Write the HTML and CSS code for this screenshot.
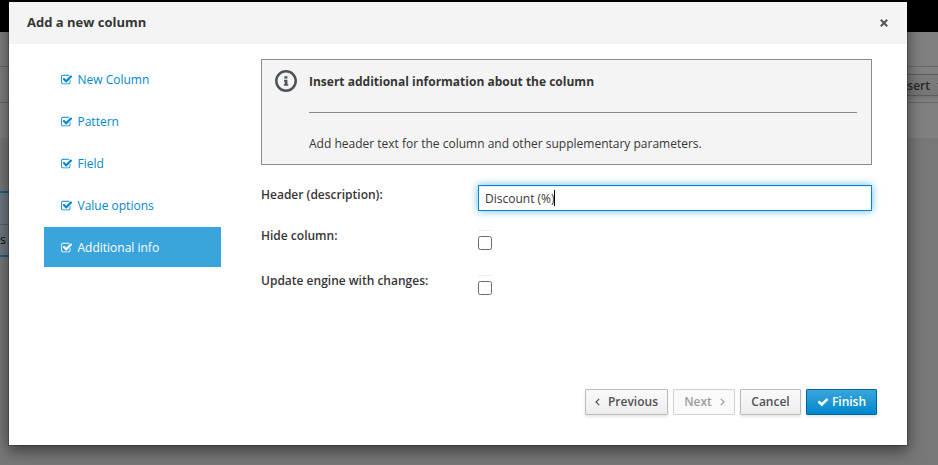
FILE: index.html
```html
<!DOCTYPE html>
<html lang="en">
<head>
<meta charset="utf-8">
<title>Add a new column</title>
<link rel="stylesheet" href="styles.css">
</head>
<body>
<svg class="defs" width="0" height="0">
  <symbol id="done" viewBox="0 0 1664 1792"><path d="M1408 930v318q0 119-84.5 203.5t-203.5 84.5h-832q-119 0-203.5-84.5t-84.5-203.5v-832q0-119 84.5-203.5t203.5-84.5h832q63 0 117 25 15 7 18 23 3 17-9 29l-49 49q-10 10-23 10-3 0-9-2-23-6-45-6h-832q-66 0-113 47t-47 113v832q0 66 47 113t113 47h832q66 0 113-47t47-113v-254q0-13 9-22l64-64q10-10 23-10 6 0 12 3 20 8 20 29zm231-489l-814 814q-24 24-57 24t-57-24l-430-430q-24-24-24-57t24-57l110-110q24-24 57-24t57 24l263 263 647-647q24-24 57-24t57 24l110 110q24 24 24 57t-24 57z"/></symbol>
</svg>
<div class="page">
  <div class="masthead"></div>
  <div class="crumbs"></div>
  <div class="toolbar"><span class="insert">Insert<span class="caret"></span></span></div>
  <div class="subbar"></div>
  <div class="canvas"><div class="grid-cell head"></div><div class="grid-cell">s</div></div>
</div>
<div class="modal">
  <header class="modal-header">
    <h4>Add a new column</h4>
    <svg class="close" width="8" height="8" viewBox="0 0 8 8"><path d="M.8.8l6.4 6.4M7.2.8L.8 7.2"/></svg>
  </header>
  <div class="modal-body">
    <nav class="steps">
      <a class="step"><svg><use href="#done"/></svg>New Column</a>
      <a class="step"><svg><use href="#done"/></svg>Pattern</a>
      <a class="step"><svg><use href="#done"/></svg>Field</a>
      <a class="step"><svg><use href="#done"/></svg>Value options</a>
      <a class="step active"><svg><use href="#done"/></svg>Additional info</a>
    </nav>
    <main class="content">
      <section class="info">
        <svg class="info-icon" width="22" height="22" viewBox="0 0 22 22"><circle cx="11" cy="11" r="9.7"/><path d="M9.4 6.2h3v2.3h-3zM9 9.8h3.4v4.4h.9v1.6H8.9v-1.6h.8v-2.8H9z"/></svg>
        <div class="info-text">
          <strong>Insert additional information about the column</strong>
          <hr>
          <p>Add header text for the column and other supplementary parameters.</p>
        </div>
      </section>
      <div class="row"><label>Header (description):</label><div class="field">Discount (%)<span class="cursor"></span></div></div>
      <div class="row hide"><label>Hide column:</label><span class="check"><input type="checkbox"></span></div>
      <div class="row update"><label>Update engine with changes:</label><span class="check"><input type="checkbox"></span></div>
    </main>
  </div>
  <footer class="modal-footer">
    <button class="btn previous"><svg width="5" height="8" viewBox="0 0 5 8"><path d="M4.2.8L1 4l3.2 3.2"/></svg>Previous</button>
    <button class="btn next">Next<svg width="5" height="8" viewBox="0 0 5 8"><path d="M.8.8L4 4 .8 7.2"/></svg></button>
    <button class="btn cancel">Cancel</button>
    <button class="btn finish"><svg width="12" height="12" viewBox="0 0 1792 1792"><path d="M1671 566q0 40-28 68l-724 724-136 136q-28 28-68 28t-68-28l-136-136-362-362q-28-28-28-68t28-68l136-136q28-28 68-28t68 28l294 295 656-657q28-28 68-28t68 28l136 136q28 28 28 68z"/></svg>Finish</button>
  </footer>
</div>
</body>
</html>
```
FILE: styles.css
```css
* { box-sizing: border-box; }
body { margin: 0; height: 465px; overflow: hidden; position: relative; font: 12px/20px "Open Sans", sans-serif; color: #363636; }
.defs { position: absolute; }
.page { height: 465px; display: flex; flex-direction: column; background: #787878; }
.masthead { height: 32px; background: #000; }
.crumbs { height: 35px; background: #808080; border-bottom: 1px solid #696969; }
.toolbar { height: 36px; padding: 7px 0 6px; display: flex; justify-content: flex-end; background: #808080; border-bottom: 1px solid #696969; }
.insert { width: 68px; height: 22px; margin-right: -10px; padding: 2px 0 0 15px; display: flex; align-items: center; border: 1px solid #5d5d5d; background: linear-gradient(#7d7d7d, #767676); box-shadow: 0 2px 3px rgba(0,0,0,.1); font-weight: 600; color: #26292c; }
.caret { margin: -2px 0 0 7px; border: 4px solid transparent; border-top-color: #26292c; border-bottom: 0; }
.subbar { height: 35px; background: #808080; }
.canvas { flex: 1; padding-top: 53px; }
.grid-cell { width: 30px; height: 32px; padding-top: 5px; background: #6f7881; border-bottom: 2px solid #1e607e; color: #080808; }
.grid-cell.head { height: 34px; border-top: 2px solid #1e607e; border-bottom: 1px solid #625d5a; }
.modal { position: absolute; left: 8px; top: 1px; width: 900px; height: 445px; display: flex; flex-direction: column; background: #fff; background-clip: padding-box; border: 1px solid rgba(0,0,0,.2); border-radius: 1px; box-shadow: 0 5px 15px rgba(0,0,0,.5); }
.modal-header { height: 42px; padding: 0 19px 2px 18px; display: flex; align-items: center; justify-content: space-between; background: #f4f4f4; }
.modal-header h4 { margin: 0; font-size: 13px; font-weight: 700; }
.close { margin-top: 1px; stroke: #555; stroke-width: 2; }
.modal-body { flex: 1; display: flex; padding: 15px 35px 0; }
.steps { width: 177px; margin-right: 40px; display: flex; flex-direction: column; gap: 2px; }
.step { height: 40px; padding: 1px 0 0 17px; display: flex; align-items: center; color: #0088ce; }
.step svg { width: 11.2px; height: 12px; margin: 0 5.3px 0 0; fill: currentColor; }
.step.active { background: #39a5dc; color: #fff; }
.content { width: 611px; }
.info { height: 106px; padding: 11px 14px 0 13px; display: flex; background: #f4f4f4; border: 1px solid #8b8b8b; }
.info-icon { margin: -1px 12px 0 0; fill: #4d5258; flex: none; }
.info-icon circle { fill: none; stroke: #4d5258; stroke-width: 2.5; }
.info-text { flex: 1; }
.info-text strong { display: block; height: 21px; padding-top: 1px; font-weight: 700; }
.info-text hr { height: 1px; margin: 20px 0 21px; border: 0; background: #8b8b8b; }
.info-text p { margin: 0; }
.row { height: 26px; margin-top: 20px; display: flex; }
.row label { width: 217px; font-weight: 600; }
.field { flex: 1; height: 26px; padding: 4px 6px 2px; display: flex; align-items: center; border: 1px solid #0088ce; box-shadow: inset 0 1px 1px rgba(3,3,3,.075), 0 0 8px rgba(0,136,206,.6); }
.cursor { width: 1px; height: 16px; margin: -2px 0 0 -1px; background: #000; }
.row.hide { margin-top: 15px; }
.row.update { margin-top: 19px; }
.check { width: 14px; height: 26px; padding-top: 5px; border-top: 1px solid #eee; margin-top: 4px; }
.check input { display: block; width: 14px; height: 14px; margin: 0; appearance: none; border: 1px solid #6b6b6b; border-radius: 2.5px; background: #fff; }
.modal-footer { height: 56px; padding-right: 30px; display: flex; justify-content: flex-end; gap: 5px; }
.btn { height: 26px; padding: 0 0 1px; display: flex; align-items: center; justify-content: center; font: 600 12px/20px "Open Sans", sans-serif; color: #4d5258; background: linear-gradient(#fafafa, #ededed); border: 1px solid #bbb; border-radius: 1px; box-shadow: 0 2px 3px rgba(3,3,3,.1); }
.btn svg { fill: none; stroke: currentColor; stroke-width: 1.2; }
.previous { width: 83px; }
.previous svg { margin-right: 8px; }
.next { width: 62px; padding-left: 1px; color: #9c9c9c; background: #fafafa; border-color: #d1d1d1; box-shadow: none; }
.next svg { margin-left: 8px; }
.cancel { width: 61px; }
.finish { width: 71px; color: #fff; background: linear-gradient(#39a5dc, #0088ce); border-color: #00659c; }
.finish svg { margin-right: 3px; fill: currentColor; stroke: none; }
```
